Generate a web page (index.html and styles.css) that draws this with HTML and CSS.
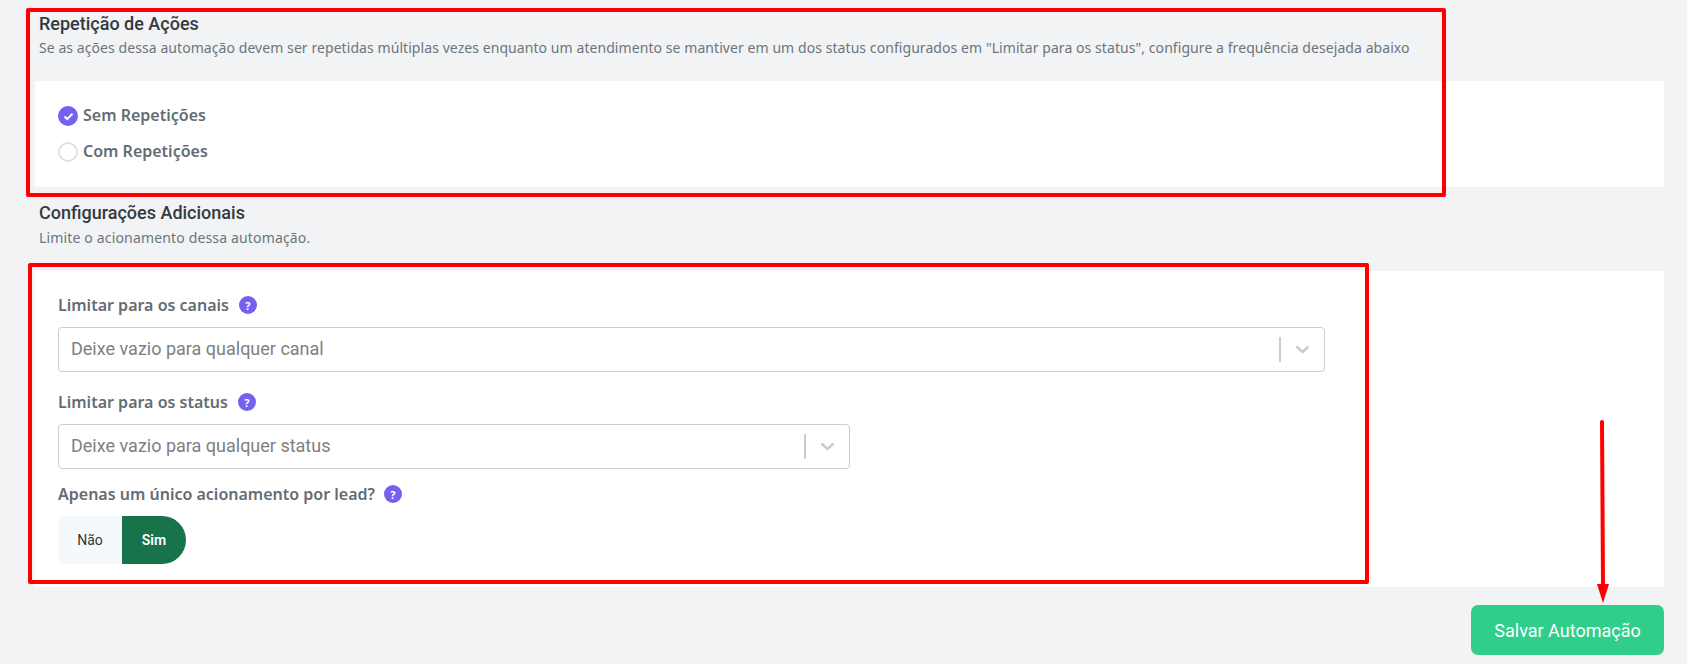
FILE: index.html
```html
<!DOCTYPE html>
<html lang="en">
  <head>
    <meta charset="utf-8" />
    <meta name="viewport" content="width=device-width, initial-scale=1" />
    <title>Salvar Automação</title>
    <link rel="stylesheet" href="styles.css">
  </head>
  <body>
    <div class="page">
      <div class="head head-first">
        <h2>Repetição de Ações</h2>
        <p>Se as ações dessa automação devem ser repetidas múltiplas vezes enquanto um atendimento se mantiver em um dos status configurados em "Limitar para os status", configure a frequência desejada abaixo</p>
      </div>
      <div class="panel panel-repeat">
        <div class="radio">
          <span class="dot on">
            <svg width="11" height="9" viewBox="0 0 11 9"><path d="M1.5 4.5 L4.2 7 L9.5 1.8" fill="none" stroke="#fff" stroke-width="2"/></svg>
          </span>
          <span class="radio-text">Sem Repetições</span>
        </div>
        <div class="radio">
          <span class="dot"></span>
          <span class="radio-text">Com Repetições</span>
        </div>
      </div>

      <div class="head head-second">
        <h2>Configurações Adicionais</h2>
        <p>Limite o acionamento dessa automação.</p>
      </div>
      <div class="panel panel-limits">
        <div class="label">Limitar para os canais <span class="help">?</span></div>
        <div class="select select-wide">
          <span class="placeholder">Deixe vazio para qualquer canal</span>
          <span class="sep"></span>
          <svg class="chev" width="15" height="9" viewBox="0 0 15 9"><path d="M1.5 1.5 L7.5 7 L13.5 1.5" fill="none" stroke="#cccccc" stroke-width="2.6"/></svg>
        </div>
        <div class="label label-status">Limitar para os status <span class="help">?</span></div>
        <div class="select select-small">
          <span class="placeholder">Deixe vazio para qualquer status</span>
          <span class="sep"></span>
          <svg class="chev" width="15" height="9" viewBox="0 0 15 9"><path d="M1.5 1.5 L7.5 7 L13.5 1.5" fill="none" stroke="#cccccc" stroke-width="2.6"/></svg>
        </div>
        <div class="label label-lead">Apenas um único acionamento por lead? <span class="help">?</span></div>
        <div class="toggle">
          <div class="no">Não</div>
          <div class="yes">Sim</div>
        </div>
      </div>

      <div class="footer">
        <button class="save">Salvar Automação</button>
      </div>
    </div>

    <div class="mark mark-one"></div>
    <div class="mark mark-two"></div>
    <svg class="arrow" width="14" height="184" viewBox="0 0 14 184">
      <path d="M5 2 L6 166" fill="none" stroke="#ff0000" stroke-width="4" stroke-linecap="round"/>
      <path d="M0 164 L12 164 L6 183 Z" fill="#ff0000"/>
    </svg>
  </body>
</html>
```

FILE: styles.css
```css
:root {
  --bg: #f1f3f5;
  --purple: #7561f0;
  --title: #343a40;
  --muted: #6c757d;
  --label: #646c74;
}
* {
  box-sizing: border-box;
}
body {
  margin: 0;
  background: var(--bg);
  font-family: "Noto Sans", sans-serif;
}
.page {
  height: 664px;
  overflow: hidden;
  padding: 0 23px 0 35px;
}
.head {
  padding-left: 4px;
}
.head h2 {
  margin: 0;
  font-family: Roboto, sans-serif;
  font-size: 18px;
  font-weight: 500;
  line-height: 24px;
  color: var(--title);
}
.head p {
  margin: 1px 0 0;
  font-size: 14px;
  line-height: 22px;
  letter-spacing: 0.07px;
  color: var(--muted);
  white-space: nowrap;
}
.head-first {
  height: 81px;
  padding-top: 12px;
}
.head-second {
  height: 84px;
  padding-top: 14px;
}
.head-second p {
  margin-top: 2px;
  letter-spacing: 0.16px;
}
.panel {
  background: #fff;
}
.panel-repeat {
  height: 106px;
  padding: 25px 23px 0;
  display: flex;
  flex-direction: column;
  gap: 16px;
}
.radio {
  display: flex;
  align-items: center;
  gap: 5px;
  height: 20px;
  font-size: 16px;
  font-weight: 600;
  color: var(--label);
}
.radio-text {
  margin-top: -2px;
}
.dot {
  width: 20px;
  height: 20px;
  border-radius: 50%;
  border: 2px solid #dee2e6;
  display: flex;
  align-items: center;
  justify-content: center;
}
.dot.on {
  background: var(--purple);
  border-color: var(--purple);
}
.panel-limits {
  height: 316px;
  padding: 24px 23px 0;
}
.label {
  display: flex;
  align-items: center;
  gap: 10px;
  height: 20px;
  font-size: 16px;
  font-weight: 600;
  color: var(--label);
}
.label-status {
  margin-top: 20px;
}
.label-lead {
  margin-top: 15px;
  gap: 9px;
}
.help {
  width: 18px;
  height: 18px;
  border-radius: 50%;
  background: var(--purple);
  color: #fff;
  font-size: 11px;
  font-weight: 700;
  display: flex;
  align-items: center;
  justify-content: center;
}
.select {
  margin-top: 12px;
  height: 45px;
  background: #fff;
  border: 1px solid #cccccc;
  border-radius: 4px;
  display: flex;
  align-items: center;
  padding: 0 14px 0 12px;
}
.select-wide {
  width: 1267px;
}
.select-small {
  width: 792px;
}
.placeholder {
  flex: 1;
  margin-top: -2px;
  font-family: Roboto, sans-serif;
  font-size: 18px;
  color: #808080;
}
.sep {
  width: 2px;
  height: 25px;
  background: #cccccc;
  margin-right: 14px;
}
.toggle {
  margin-top: 12px;
  display: flex;
  width: 128px;
  height: 48px;
  font-family: Roboto, sans-serif;
  font-size: 14px;
}
.toggle div {
  width: 64px;
  display: flex;
  align-items: center;
  justify-content: center;
}
.no {
  background: #f6f9fc;
  color: #333;
  border-radius: 6px 0 0 6px;
}
.yes {
  background: #18734a;
  color: #fff;
  font-weight: 600;
  border-radius: 0 24px 24px 0;
}
.footer {
  display: flex;
  justify-content: flex-end;
  padding-top: 18px;
}
.save {
  width: 193px;
  height: 50px;
  border: none;
  border-radius: 7px;
  background: #2fce8b;
  color: #fff;
  font-family: Roboto, sans-serif;
  font-size: 18px;
}

/* red markings drawn on top of the screenshot */
.mark {
  position: absolute;
  border: 4px solid #ff0000;
  border-radius: 2px;
}
.mark-one {
  left: 26px;
  top: 8px;
  width: 1420px;
  height: 189px;
}
.mark-two {
  left: 28px;
  top: 263px;
  width: 1341px;
  height: 321px;
}
.arrow {
  position: absolute;
  left: 1597px;
  top: 420px;
}
```
